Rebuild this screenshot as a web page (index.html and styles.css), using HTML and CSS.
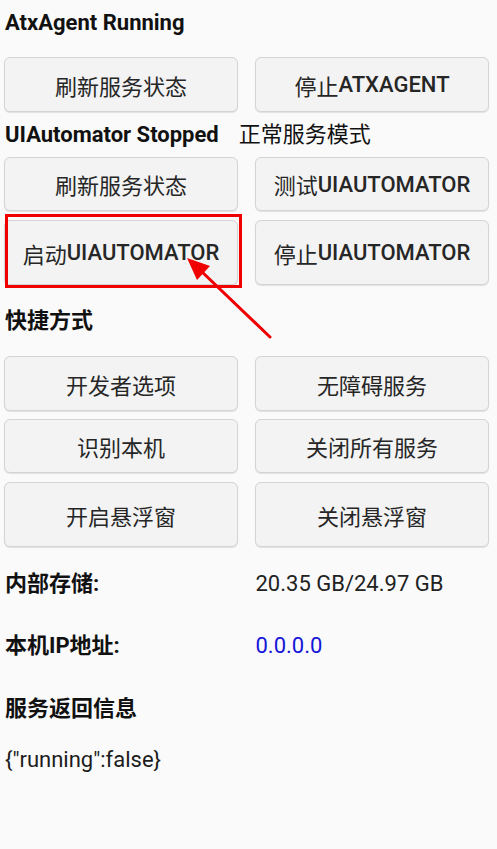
FILE: index.html
```html
<!DOCTYPE html>
<html lang="zh-CN">
<head>
<meta charset="utf-8">
<title>ATX</title>
<link rel="stylesheet" href="styles.css">
</head>
<body>
<div class="page">
  <div class="label title-1">AtxAgent Running</div>
  <div class="grid grid-1">
    <button class="btn">刷新服务状态</button>
    <button class="btn">停止<span class="lat">ATXAGENT</span></button>
  </div>

  <div class="label-row">
    <span class="label">UIAutomator Stopped</span>
    <span class="mode">正常服务模式</span>
  </div>
  <div class="grid grid-2">
    <button class="btn">刷新服务状态</button>
    <button class="btn">测试<span class="lat">UIAUTOMATOR</span></button>
    <button class="btn tall">启动<span class="lat">UIAUTOMATOR</span></button>
    <button class="btn tall">停止<span class="lat">UIAUTOMATOR</span></button>
  </div>

  <div class="label title-3">快捷方式</div>
  <div class="grid grid-3">
    <button class="btn">开发者选项</button>
    <button class="btn">无障碍服务</button>
    <button class="btn short">识别本机</button>
    <button class="btn short">关闭所有服务</button>
    <button class="btn tall">开启悬浮窗</button>
    <button class="btn tall">关闭悬浮窗</button>
  </div>

  <div class="info info-1">
    <span class="label">内部存储:</span>
    <span class="value">20.35 GB/24.97 GB</span>
  </div>
  <div class="info info-2">
    <span class="label">本机IP地址:</span>
    <span class="value ip">0.0.0.0</span>
  </div>
  <div class="label title-4">服务返回信息</div>
  <div class="json">{"running":false}</div>
</div>

<svg class="annotation" width="497" height="849" viewBox="0 0 497 849" xmlns="http://www.w3.org/2000/svg">
  <rect x="6.5" y="215.5" width="234" height="71" fill="none" stroke="#f00000" stroke-width="3"/>
  <line x1="270" y1="337" x2="200" y2="270" stroke="#f00000" stroke-width="3" stroke-linecap="round"/>
  <polygon points="187,258 210,266 197,280" fill="#f00000"/>
</svg>
</body>
</html>
```
FILE: styles.css
```css
html, body {
  margin: 0;
  padding: 0;
  background: #fafafa;
}
body {
  font-family: Roboto, "Noto Sans CJK SC", sans-serif;
  font-size: 22px;
  color: #1c1c1c;
  width: 497px;
  height: 849px;
  position: relative;
  overflow: hidden;
}
.page {
  padding: 9px 8px 0 4px;
}
.label {
  font-weight: 700;
  color: #111;
  line-height: 28px;
}
.title-1 {
  padding-left: 1px;
}
.grid {
  display: grid;
  grid-template-columns: 1fr 1fr;
  column-gap: 17px;
}
.grid-1 {
  margin-top: 20px;
}
.btn {
  font-family: Roboto, "Noto Sans CJK SC", sans-serif;
  font-size: 22px;
  font-weight: 400;
  color: #262626;
  background: #f3f3f3;
  border: 1px solid #d4d4d4;
  border-radius: 6px;
  box-shadow: 0 1px 1px rgba(0, 0, 0, 0.1);
  height: 55px;
  padding: 0;
  margin: 0;
  display: flex;
  align-items: center;
  justify-content: center;
  white-space: nowrap;
}
.btn.short {
  height: 54px;
}
.btn.tall {
  height: 65px;
}
.lat {
  font-weight: 500;
}
.label-row {
  margin-top: 9px;
  display: flex;
  gap: 20px;
  line-height: 28px;
  padding-left: 1px;
}
.mode {
  font-weight: 400;
  color: #111;
}
.grid-2 {
  margin-top: 8px;
  grid-template-rows: 54px 65px;
  row-gap: 9px;
}
.grid-2 .btn {
  height: 100%;
}
.title-3 {
  margin-top: 22px;
  padding-left: 1px;
}
.grid-3 {
  margin-top: 21px;
  grid-template-rows: 55px 54px 65px;
  row-gap: 8px;
}
.grid-3 .btn {
  height: 100%;
}
.grid-3 .btn.tall {
  margin-top: 1px;
}
.info {
  display: grid;
  grid-template-columns: 1fr 1fr;
  column-gap: 17px;
  line-height: 28px;
  padding-left: 1px;
}
.info-1 {
  margin-top: 24px;
}
.info-2 {
  margin-top: 34px;
}
.value {
  color: #222;
  font-weight: 400;
}
.ip {
  color: #1515d8;
}
.title-4 {
  margin-top: 35px;
  padding-left: 1px;
}
.json {
  margin-top: 23px;
  line-height: 28px;
  padding-left: 1px;
  color: #1c1c1c;
}
.annotation {
  position: absolute;
  left: 0;
  top: 0;
  pointer-events: none;
}
```
